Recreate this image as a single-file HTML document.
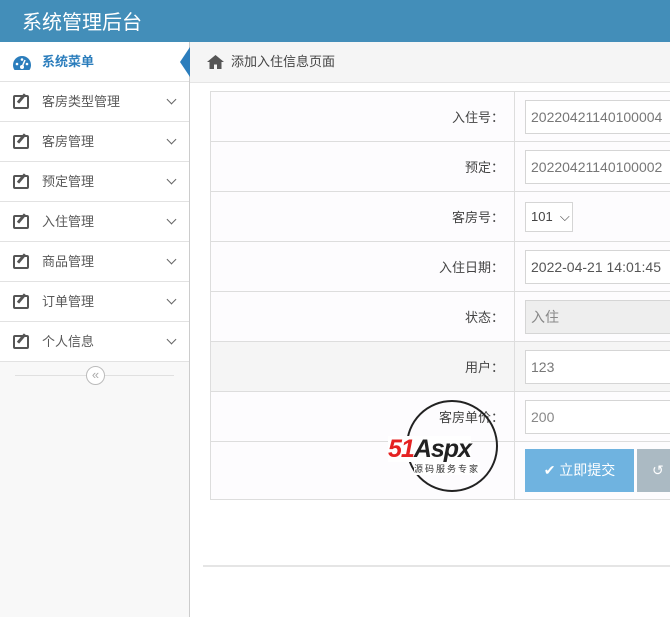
<!DOCTYPE html>
<html><head><meta charset="utf-8"><style>
*{margin:0;padding:0;box-sizing:border-box}
body{width:670px;height:617px;overflow:hidden;font-family:"Liberation Sans","Noto Sans CJK SC",sans-serif;font-size:13px;color:#555;background:#fff;position:relative}
.hd{position:absolute;left:0;top:0;width:670px;height:42px;background:#438eb9;color:#fff;font-size:20px;padding:6px 0 0 22px}
.sb{position:absolute;left:0;top:42px;width:190px;height:575px;background:#f8f8f8;border-right:1px solid #ccc}
.mi{height:40px;border-bottom:1px solid #e2e2e2;background:#fff;position:relative;line-height:39px;padding-left:42px;color:#585858}
.mi.act{color:#2b7dbc;font-weight:bold;}
.ic{position:absolute;left:13px;top:13px;width:16px;height:14px;border:2px solid #555;border-radius:2px}
.ic:after{content:"";position:absolute;left:5px;top:-4px;width:3px;height:11px;background:#555;transform:rotate(40deg)}
.ch{position:absolute;right:14px;top:14px;width:7px;height:7px;border-right:1.5px solid #666;border-bottom:1.5px solid #666;transform:rotate(45deg)}
.bc{position:absolute;left:190px;top:42px;width:480px;height:41px;background:#f5f5f5;border-bottom:1px solid #e5e5e5;line-height:40px;padding-left:41px;color:#444}
table{position:absolute;left:210px;top:91px;border-collapse:collapse;width:700px;table-layout:fixed}
td{border:1px solid #ddd;background:#fdfcfe;height:50px}
td.l{width:304px;text-align:right;padding-right:10px;color:#444}
td.r{padding-left:10px}
.in{height:34px;border:1px solid #d5d5d5;width:200px;padding-left:5px;line-height:32px;color:#777;font-size:14px;background:#fff}
.btn{display:inline-block;height:43px;line-height:43px;color:#fff;font-size:14px;vertical-align:middle}
</style></head><body>
<div class="hd">系统管理后台</div>
<div class="sb">
<div class="mi act"><svg style="position:absolute;left:12px;top:13px" width="20" height="16" viewBox="0 0 20 16"><path d="M10 1A9 9 0 0 0 1 10c0 2 .6 4 1.6 5h14.8c1-1 1.6-3 1.6-5A9 9 0 0 0 10 1z" fill="#2b7dbc"/><circle cx="10" cy="12" r="2" fill="#fff"/><path d="M10 12L13 5" stroke="#fff" stroke-width="1.5"/><circle cx="5" cy="9" r="1.3" fill="#fff"/><circle cx="15" cy="9" r="1.3" fill="#fff"/><circle cx="10" cy="4.5" r="1.3" fill="#fff"/></svg>系统菜单
<div style="position:absolute;right:-1px;top:5px;width:0;height:0;border-top:15px solid transparent;border-bottom:15px solid transparent;border-right:10px solid #2b7dbc"></div></div>
<div class="mi"><i class="ic"></i>客房类型管理<i class="ch"></i></div>
<div class="mi"><i class="ic"></i>客房管理<i class="ch"></i></div>
<div class="mi"><i class="ic"></i>预定管理<i class="ch"></i></div>
<div class="mi"><i class="ic"></i>入住管理<i class="ch"></i></div>
<div class="mi"><i class="ic"></i>商品管理<i class="ch"></i></div>
<div class="mi"><i class="ic"></i>订单管理<i class="ch"></i></div>
<div class="mi"><i class="ic"></i>个人信息<i class="ch"></i></div>
<div style="position:relative;height:28px"><div style="position:absolute;left:15px;right:15px;top:13px;border-top:1px solid #e0e0e0"></div><div style="position:absolute;left:86px;top:4px;width:19px;height:19px;border:1px solid #bbb;border-radius:50%;background:#fff;text-align:center;line-height:16px;font-size:13px;color:#aaa">«</div></div>
</div>
<div class="bc"><svg style="position:absolute;left:17px;top:13px" width="17" height="14" viewBox="0 0 17 14"><path d="M8.5 0L0 7h2.5v7h4.5V9.5h3V14h4.5V7H17z" fill="#555"/></svg>添加入住信息页面</div>
<table>
<tr><td class="l">入住号：</td><td class="r"><div class="in">20220421140100004</div></td></tr>
<tr><td class="l">预定：</td><td class="r"><div class="in">20220421140100002</div></td></tr>
<tr><td class="l" style="height:48px">客房号：</td><td class="r"><div class="in" style="width:48px;height:30px;line-height:28px;font-size:13px;color:#444">101 &nbsp;⌵</div></td></tr>
<tr><td class="l">入住日期：</td><td class="r"><div class="in" style="color:#555">2022-04-21 14:01:45</div></td></tr>
<tr><td class="l">状态：</td><td class="r"><div class="in" style="background:#eee;color:#888">入住</div></td></tr>
<tr><td class="l" style="background:#f5f5f5">用户：</td><td class="r" style="background:#f5f5f5"><div class="in">123</div></td></tr>
<tr><td class="l">客房单价：</td><td class="r"><div class="in" style="color:#888">200</div></td></tr>
<tr><td class="l" style="height:58px"></td><td class="r"><span class="btn" style="background:#6fb3e0;width:109px;text-align:center">✔ 立即提交</span><span class="btn" style="background:#abbac3;width:40px;margin-left:3px;padding-left:15px">↺</span></td></tr>
</table>
<div style="position:absolute;left:388px;top:400px;width:124px;height:95px">
<div style="position:absolute;left:18px;top:0;width:92px;height:92px;border:2px solid #222;border-radius:50%"></div>
<div style="position:absolute;left:0;top:36px;font:italic bold 25px 'Liberation Sans',sans-serif;letter-spacing:-1px;background:#fff;line-height:26px"><span style="color:#e52222">51</span><span style="color:#222">Aspx</span></div>
<div style="position:absolute;left:26px;top:62px;font-size:9px;color:#333;background:#fff;letter-spacing:2px">源码服务专家</div>
</div>
<div style="position:absolute;left:203px;top:565px;width:467px;border-top:2px solid #e5e5e5"></div>
</body></html>
